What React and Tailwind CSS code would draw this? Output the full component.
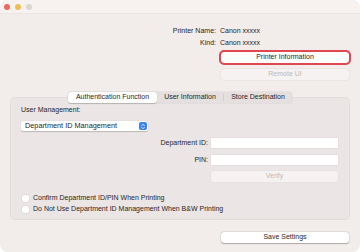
import React from "react";

const font = { fontFamily: '"Liberation Sans", Arial, sans-serif' };

function Btn({ children, disabled, focused, className = "" }) {
  return (
    <div
      className={
        "flex h-[11px] items-center justify-center rounded-[3px] text-[7px] " +
        (disabled
          ? "bg-[#f6f2f1] text-[#bcb8b7] shadow-[0_0_0_0.5px_#e3dedd] "
          : "bg-white text-[#1f1f1f] shadow-[0_0.5px_1px_rgba(0,0,0,0.25),0_0_0_0.5px_#d8d3d2] ") +
        (focused ? "outline-2 outline-offset-0 outline-[#e0474f] " : "") +
        className
      }
    >
      {children}
    </div>
  );
}

function Field() {
  return <div className="h-[10px] w-[127px] bg-white shadow-[0_0_0_0.5px_#ddd8d7]" />;
}

function Check({ label }) {
  return (
    <div className="flex h-[11px] items-center gap-[4px]">
      <div className="h-[7px] w-[7px] rounded-[2px] bg-white shadow-[0_0_0_0.5px_#d6d1d0]" />
      <span className="text-[7px] text-[#1f1f1f]">{label}</span>
    </div>
  );
}

export default function App() {
  return (
    <div className="h-[252px] w-[360px] bg-white" style={font}>
      <div className="flex h-full flex-col overflow-hidden rounded-[8px] bg-[#f2eceb]">
        {/* title bar */}
        <div className="flex h-[14px] items-center gap-[5px] border-b border-[#ebe5e3] bg-[#f7f2f0] pl-[4px]">
          <div className="h-[6px] w-[6px] rounded-full bg-[#ec6a5e]" />
          <div className="h-[6px] w-[6px] rounded-full bg-[#f3be4f]" />
          <div className="h-[6px] w-[6px] rounded-full bg-[#dad6d4]" />
        </div>

        {/* printer info */}
        <div className="mt-[11px] grid grid-cols-[216px_1fr] gap-x-[4px] text-[7px] leading-[12px] text-[#262626]">
          <div className="text-right">Printer Name:</div>
          <div>Canon xxxxx</div>
          <div className="text-right">Kind:</div>
          <div>Canon xxxxx</div>
        </div>

        <div className="ml-[221px] mt-[3px] flex w-[128px] flex-col gap-[6px]">
          <Btn focused>Printer Information</Btn>
          <Btn disabled>Remote UI</Btn>
        </div>

        {/* tabs */}
        <div className="relative z-10 ml-[68px] mt-[12px] flex h-[11px] w-[224px] items-center rounded-[3px] bg-[#e5e0df] text-[7px] text-[#1f1f1f] shadow-[0_0_0_0.5px_#dcd6d5]">
          <div className="flex h-full w-[89px] items-center justify-center rounded-[3px] bg-white shadow-[0_0.5px_1px_rgba(0,0,0,0.2)]">
            Authentication Function
          </div>
          <div className="flex h-full w-[66px] items-center justify-center">User Information</div>
          <div className="h-[7px] w-px bg-[#d2cccb]" />
          <div className="flex h-full flex-1 items-center justify-center">Store Destination</div>
        </div>

        {/* group panel */}
        <div className="mx-[10px] -mt-[6px] flex h-[123px] flex-col rounded-[5px] border border-[#e2dcdb] bg-[#ebe6e5] pl-[10px] pr-[11px] pt-[7px]">
          <div className="text-[7px] leading-[10px] text-[#1f1f1f]">User Management:</div>
          <div className="mt-[6px] flex h-[10px] w-[127px] items-center justify-between rounded-[2px] bg-white pl-[4px] pr-[1px] shadow-[0_0.5px_1px_rgba(0,0,0,0.2)]">
            <span className="text-[7.3px] text-[#1f1f1f]">Department ID Management</span>
            <div className="flex h-[8px] w-[8px] flex-col items-center justify-center rounded-[2px] bg-[#3a82f7]">
              <svg width="6" height="7" viewBox="0 0 6 7">
                <path d="M1.5 2.8 L3 1.3 L4.5 2.8 M1.5 4.2 L3 5.7 L4.5 4.2" stroke="white" strokeWidth="0.9" fill="none" />
              </svg>
            </div>
          </div>

          <div className="mt-[7px] flex flex-col gap-[6px] self-end">
            <div className="flex items-center gap-[3px]">
              <span className="text-[7px] text-[#1f1f1f]">Department ID:</span>
              <Field />
            </div>
            <div className="flex items-center justify-end gap-[3px]">
              <span className="text-[7px] text-[#1f1f1f]">PIN:</span>
              <Field />
            </div>
            <div className="flex justify-end">
              <Btn disabled className="h-[11px] w-[127px]">Verify</Btn>
            </div>
          </div>

          <div className="mt-[11px] flex flex-col pl-[1px]">
            <Check label="Confirm Department ID/PIN When Printing" />
            <Check label="Do Not Use Department ID Management When B&W Printing" />
          </div>
        </div>

        <div className="ml-[221px] mt-[12px] w-[128px]">
          <Btn>Save Settings</Btn>
        </div>
      </div>
    </div>
  );
}
